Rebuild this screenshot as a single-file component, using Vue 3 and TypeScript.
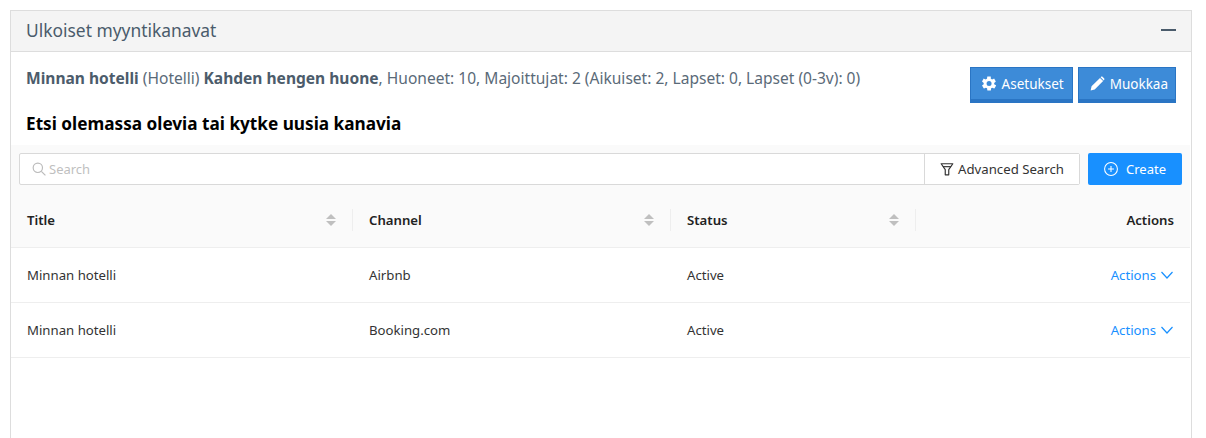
<script setup lang="ts">
const rows = [
  { title: 'Minnan hotelli', channel: 'Airbnb', status: 'Active' },
  { title: 'Minnan hotelli', channel: 'Booking.com', status: 'Active' },
]
const sortable = ['Title', 'Channel', 'Status']
</script>

<template>
  <div class="page">
    <section class="panel">
      <header class="panel-head">
        <span class="panel-title">Ulkoiset myyntikanavat</span>
        <span class="collapse"></span>
      </header>
      <div class="intro">
        <p class="summary">
          <b>Minnan hotelli</b> (Hotelli) <b>Kahden hengen huone</b>, Huoneet: 10, Majoittujat: 2 (Aikuiset: 2, Lapset: 0, Lapset (0-3v): 0)
        </p>
        <div class="btns">
          <button class="btn">
            <svg width="15" height="15" viewBox="0 0 24 24"><path fill="#fff" d="M19.400 13c.1-.3.1-.7.1-1s0-.7-.1-1l2.400-1.900c.2-.2.300-.4.100-.7l-2.300-4c-.1-.2-.4-.3-.7-.2l-2.900 1.200c-.6-.4-1.200-.8-1.900-1L14.100 1.300c0-.3-.3-.5-.5-.5H9c-.3 0-.5.200-.6.500L8 4.400c-.7.300-1.300.600-1.900 1L3.200 4.200c-.3-.1-.5 0-.7.200l-2.300 4c-.1.300-.1.500.2.700L2.800 11c-.1.300-.1.700-.1 1s0 .7.100 1L.4 14.900c-.2.200-.3.400-.1.700l2.300 4c.1.200.4.300.7.200l2.900-1.200c.6.400 1.200.8 1.900 1l.4 3.100c.1.300.3.500.6.500h4.600c.3 0 .5-.2.500-.5l.4-3.100c.7-.3 1.300-.6 1.900-1l2.900 1.200c.3.100.5 0 .7-.2l2.300-4c.2-.3.100-.5-.1-.7L19.400 13zM11.300 16a4 4 0 1 1 0-8 4 4 0 0 1 0 8z"/></svg>
            Asetukset
          </button>
          <button class="btn">
            <svg width="15" height="15" viewBox="0 0 24 24"><path fill="#fff" d="M1 23l1.500-6.500L16 3l5 5L7.500 21.500 1 23zM17.500 1.500c.8-.8 2-.8 2.800 0l2.200 2.200c.8.800.8 2 0 2.800L22 7l-5-5 .5-.5z"/></svg>
            Muokkaa
          </button>
        </div>
      </div>
      <h3 class="subtitle">Etsi olemassa olevia tai kytke uusia kanavia</h3>
      <div class="list">
        <div class="toolbar">
          <div class="search">
            <div class="search-input">
              <svg width="14" height="14" viewBox="0 0 24 24" fill="none" stroke="#bbb" stroke-width="2"><circle cx="10" cy="10" r="8"/><path d="M16 16l7 7"/></svg>
              <span class="ph">Search</span>
            </div>
            <button class="adv">
              <svg width="14" height="14" viewBox="0 0 24 24" fill="none" stroke="#333" stroke-width="2" stroke-linejoin="round"><path d="M2 3h20l-7 10v9H9v-9L2 3z"/><path d="M5 8h14" /></svg>
              Advanced Search
            </button>
          </div>
          <button class="create">
            <svg width="14" height="14" viewBox="0 0 24 24" fill="none" stroke="#fff" stroke-width="1.800"><circle cx="12" cy="12" r="11"/><path d="M12 7v10M7 12h10"/></svg>
            Create
          </button>
        </div>
        <div class="row head">
          <div v-for="h in sortable" :key="h" class="cell th">
            <span>{{ h }}</span>
            <span class="sort"><i class="up"></i><i class="down"></i></span>
          </div>
          <div class="cell th end">Actions</div>
        </div>
        <div v-for="(r, i) in rows" :key="i" class="row body">
          <div class="cell">{{ r.title }}</div>
          <div class="cell">{{ r.channel }}</div>
          <div class="cell">{{ r.status }}</div>
          <div class="cell end link">
            Actions
            <svg width="12" height="8" viewBox="0 0 12 8" fill="none" stroke="#1890ff" stroke-width="1.200"><path d="M.5 1L6 7l5.500-6"/></svg>
          </div>
        </div>
      </div>
    </section>
  </div>
</template>

<style>
html, body { margin: 0; background: #fff; overflow: hidden; }
</style>

<style scoped>
.page {
  height: 438px;
  padding: 10px 14px 0 10px;
  box-sizing: border-box;
  overflow: hidden;
  font-family: "Noto Sans", "Open Sans", sans-serif;
}
.panel {
  border: 1px solid #ddd;
  height: 440px;
  box-sizing: border-box;
}
.panel-head {
  height: 41px;
  box-sizing: border-box;
  background: #f4f4f4;
  border-bottom: 1px solid #ddd;
  display: flex;
  align-items: center;
  justify-content: space-between;
  padding: 0 15px;
}
.panel-title { font-size: 17.400px; line-height: 24px; color: #4a5b6b; margin-top: -2px; }
.collapse { width: 15px; height: 2px; background: #4a5b6b; margin-top: -2px; }
.intro {
  display: flex;
  justify-content: space-between;
  padding: 15px 15px 0;
  height: 52px;
  box-sizing: border-box;
}
.summary { margin: 0; font-size: 15.560px; line-height: 22px; color: #5a6a78; }
.summary b { font-weight: 700; color: #4c5c6b; }
.btns { display: flex; gap: 5px; height: 36px; }
.btn {
  height: 36px;
  padding: 0 8px 0 11px;
  display: flex;
  align-items: center;
  gap: 5px;
  font: 13.500px "Noto Sans", sans-serif;
  color: #fff;
  background: #3d8bd8;
  border: 1px solid #2a75c4;
  border-bottom: 4px solid #2a75c4;
  box-sizing: border-box;
}
.btn:last-child { padding-right: 7px; }
.subtitle {
  margin: 8px 0 0 15px;
  font-size: 17.200px;
  line-height: 24px;
  font-weight: 700;
  color: #000;
  height: 24px;
}
.list { margin: 9px 1px 0 0; background: #fafafa; }
.toolbar { display: flex; gap: 8px; padding: 8px; }
.search {
  flex: 1;
  display: flex;
  height: 32px;
  background: #fff;
  border: 1px solid #d9d9d9;
  border-radius: 2px;
  box-sizing: border-box;
}
.search-input { flex: 1; display: flex; align-items: center; gap: 3px; padding-left: 12px; }
.ph { font-size: 13px; color: #bfbfbf; }
.adv {
  width: 155px;
  border: 0;
  border-left: 1px solid #d9d9d9;
  background: #fff;
  display: flex;
  align-items: center;
  justify-content: center;
  gap: 4px;
  font: 13.200px "Noto Sans", sans-serif;
  color: #333;
}
.create {
  width: 94px;
  height: 32px;
  border: 0;
  border-radius: 2px;
  background: #1890ff;
  color: #fff;
  display: flex;
  align-items: center;
  justify-content: center;
  gap: 8px;
  font: 13px "Noto Sans", sans-serif;
}
.row {
  display: grid;
  grid-template-columns: 341px 318px 245px 1fr;
  border-bottom: 1px solid #eee;
  background: #fff;
  font-size: 13.200px;
  color: #333;
}
.row.head {
  height: 55px;
  background: #fafafa;
  box-sizing: border-box;
}
.row.body { height: 55px; box-sizing: border-box; }
.cell {
  display: flex;
  align-items: center;
  padding: 0 16px;
  position: relative;
}
.cell:nth-child(2), .cell:nth-child(3) { padding-left: 17px; }
.th { font-weight: 600; color: #222; justify-content: space-between; }
.th + .th::before {
  content: "";
  position: absolute;
  left: 0;
  top: 16px;
  width: 1px;
  height: 22px;
  background: #eee;
}
.end { justify-content: flex-end; }
.link { color: #1890ff; gap: 5px; }
.link svg { margin-right: 1px; }
.sort { display: flex; flex-direction: column; gap: 2px; }
.sort i { display: block; width: 0; height: 0; border-left: 5px solid transparent; border-right: 5px solid transparent; }
.up { border-bottom: 5px solid #bfbfbf; }
.down { border-top: 5px solid #bfbfbf; }
</style>
